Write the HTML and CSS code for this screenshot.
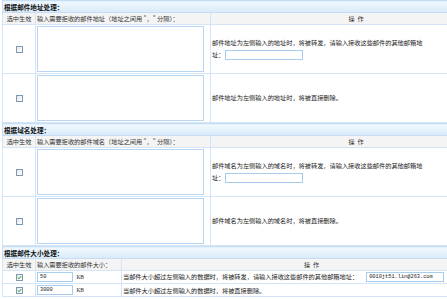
FILE: index.html
```html
<!doctype html>
<html lang="zh-CN">
  <head>
    <meta charset="UTF-8">
    <title>邮件拒收规则</title>
    <link rel="stylesheet" href="styles.css">
  </head>
  <body>
    <div class="page">

      <!-- 根据邮件地址 -->
      <table class="rule">
        <colgroup><col class="c-chk"><col class="c-in"><col></colgroup>
        <tr class="title"><th colspan="3">根据邮件地址处理：</th></tr>
        <tr class="head">
          <td class="center">选中生效</td>
          <td>输入需要拒收的邮件地址（地址之间用 "，" 分隔）：</td>
          <td class="center">操&nbsp;&nbsp;作</td>
        </tr>
        <tr class="row">
          <td class="center"><span class="chk"></span></td>
          <td><textarea class="list"></textarea></td>
          <td><div class="desc">邮件地址为左侧输入的地址时，将被转发，请输入接收这些邮件的其他邮箱地址：<input class="mail" type="text"></div></td>
        </tr>
        <tr class="row">
          <td class="center"><span class="chk"></span></td>
          <td><textarea class="list"></textarea></td>
          <td><div class="desc">邮件地址为左侧输入的地址时，将被直接删除。</div></td>
        </tr>
      </table>

      <!-- 根据域名 -->
      <table class="rule">
        <colgroup><col class="c-chk"><col class="c-in"><col></colgroup>
        <tr class="title"><th colspan="3">根据域名处理：</th></tr>
        <tr class="head">
          <td class="center">选中生效</td>
          <td>输入需要拒收的邮件域名（地址之间用 "，" 分隔）：</td>
          <td class="center">操&nbsp;&nbsp;作</td>
        </tr>
        <tr class="row">
          <td class="center"><span class="chk"></span></td>
          <td><textarea class="list"></textarea></td>
          <td><div class="desc">邮件域名为左侧输入的域名时，将被转发，请输入接收这些邮件的其他邮箱地址：<input class="mail" type="text"></div></td>
        </tr>
        <tr class="row">
          <td class="center"><span class="chk"></span></td>
          <td><textarea class="list"></textarea></td>
          <td><div class="desc">邮件域名为左侧输入的域名时，将被直接删除。</div></td>
        </tr>
      </table>

      <!-- 根据邮件大小 -->
      <table class="rule">
        <colgroup><col class="c-chk"><col class="c-size"><col></colgroup>
        <tr class="title"><th colspan="3">根据邮件大小处理：</th></tr>
        <tr class="head">
          <td class="center">选中生效</td>
          <td>输入需要拒收的邮件大小：</td>
          <td class="center">操&nbsp;&nbsp;作</td>
        </tr>
        <tr class="line">
          <td class="center"><span class="chk on"><svg viewBox="0 0 7 7" width="5" height="5"><path d="M1 3.5 L2.8 5.3 L6 1.5" fill="none" stroke="#21a121" stroke-width="1.4"/></svg></span></td>
          <td><input class="size" type="text" value="50"> <span class="unit">KB</span></td>
          <td>当邮件大小超过左侧输入的数据时，将被转发，请输入接收这些邮件的其他邮箱地址：<input class="fwd" type="text" value="0010jt51.lin@263.com"></td>
        </tr>
        <tr class="line">
          <td class="center"><span class="chk on"><svg viewBox="0 0 7 7" width="5" height="5"><path d="M1 3.5 L2.8 5.3 L6 1.5" fill="none" stroke="#21a121" stroke-width="1.4"/></svg></span></td>
          <td><input class="size" type="text" value="3000"> <span class="unit">KB</span></td>
          <td>当邮件大小超过左侧输入的数据时，将被直接删除。</td>
        </tr>
      </table>

    </div>
  </body>
</html>
```

FILE: styles.css
```css
html, body {
  margin: 0;
  overflow: hidden;
  background: #fff;
}
body {
  font-family: "Noto Sans CJK SC", "DejaVu Sans", sans-serif;
  font-size: 6.2px;
  color: #222;
}
.page {
  width: 500px;
  padding-left: 2px;
}
.rule {
  width: 100%;
  border-collapse: collapse;
  table-layout: fixed;
}
.c-chk {
  width: 33px;
}
.c-in {
  width: 175px;
}
.c-size {
  width: 86px;
}
.rule th, .rule td {
  border: 1px solid #d3e5f6;
  padding: 0 1px;
  vertical-align: middle;
}
.center {
  text-align: center;
}
.title th {
  height: 11px;
  text-align: left;
  font-size: 6.6px;
  font-weight: bold;
  color: #111;
  background: linear-gradient(#f1f8fe, #d9eaf9);
  border-color: #c6ddf3;
}
.head td {
  height: 11px;
  background: #f5f4f4;
  color: #333;
  white-space: nowrap;
}
.row td {
  height: 48px;
}
.line td {
  height: 12px;
  white-space: nowrap;
}
.desc {
  max-width: 216px;
  line-height: 12px;
}
.chk {
  display: inline-block;
  width: 5px;
  height: 5px;
  border: 1px solid #8098b2;
  background: linear-gradient(135deg, #e4e8ec, #fff);
  vertical-align: middle;
  line-height: 0;
}
.list {
  display: block;
  box-sizing: border-box;
  width: 167px;
  height: 46px;
  margin: 0;
  border: 1px solid #b9d7f2;
  resize: none;
  overflow-y: scroll;
  padding: 0;
}
.list::-webkit-scrollbar {
  width: 8px;
}
.list::-webkit-scrollbar-track {
  background: #fff;
}
.list::-webkit-scrollbar-button:vertical:start:decrement,
.list::-webkit-scrollbar-button:vertical:end:increment {
  display: block;
  height: 8px;
  background: #dbe8f6;
  border: 1px solid #fff;
  box-sizing: border-box;
}
.list::-webkit-scrollbar-button:vertical:start:increment,
.list::-webkit-scrollbar-button:vertical:end:decrement {
  display: none;
}
.mail {
  box-sizing: border-box;
  width: 78px;
  height: 10px;
  margin: 0 0 0 1px;
  padding: 0;
  border: 1px solid #a9cdee;
  vertical-align: middle;
}
.size, .fwd {
  box-sizing: border-box;
  height: 10px;
  padding: 0 2px;
  border: 1px solid #a9cdee;
  font-family: "Liberation Mono", monospace;
  font-size: 5.3px;
  color: #222;
  vertical-align: middle;
}
.size {
  width: 36px;
  margin: 0 2px 0 0;
}
.fwd {
  width: 78px;
  margin-left: 8px;
}
.unit {
  font-family: "Liberation Serif", serif;
  font-size: 5.5px;
}
```
